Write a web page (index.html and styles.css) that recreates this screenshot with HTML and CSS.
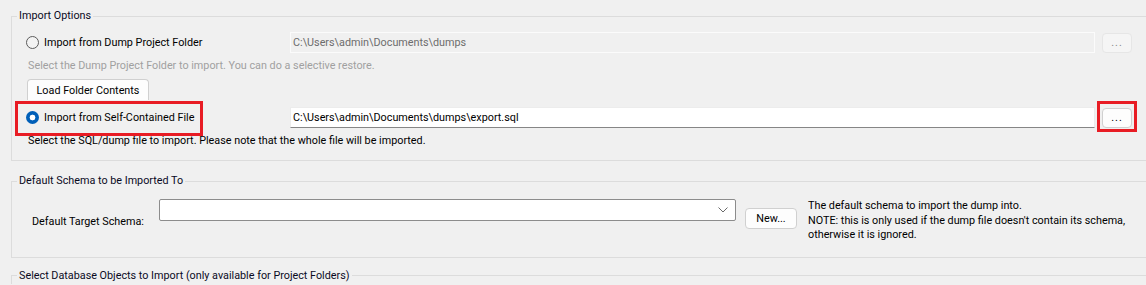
FILE: index.html
```html
<!DOCTYPE html>
<html lang="en">
<head>
    <meta charset="UTF-8">
    <title>Data Import</title>
    <link rel="stylesheet" href="styles.css">
</head>
<body>

    <fieldset class="group group-options">
        <legend>Import Options</legend>
        <div class="group-body">

            <div class="row row-first">
                <label class="radio-label">
                    <span class="radio"></span>
                    <span>Import from Dump Project Folder</span>
                </label>
                <div class="field field-disabled">C:\Users\admin\Documents\dumps</div>
                <button class="btn btn-browse" disabled>...</button>
            </div>
            <p class="hint hint-disabled">Select the Dump Project Folder to import. You can do a selective restore.</p>

            <button class="btn btn-load">Load Folder Contents</button>

            <div class="row row-second">
                <label class="radio-label marked">
                    <span class="radio checked"></span>
                    <span>Import from Self-Contained File</span>
                </label>
                <div class="field">C:\Users\admin\Documents\dumps\export.sql</div>
                <button class="btn btn-browse marked-btn">...</button>
            </div>
            <p class="hint">Select the SQL/dump file to import. Please note that the whole file will be imported.</p>

        </div>
    </fieldset>

    <fieldset class="group group-schema">
        <legend>Default Schema to be Imported To</legend>
        <div class="group-body">

            <div class="schema-row">
                <span class="schema-label">Default Target Schema:</span>
                <div class="combo">
                    <svg class="chevron" width="10" height="6" viewBox="0 0 10 6">
                        <path d="M0.5 0.5 L5 5 L9.5 0.5" fill="none" stroke="#6a6a6a" stroke-width="1"/>
                    </svg>
                </div>
                <button class="btn btn-new">New...</button>
                <p class="note">The default schema to import the dump into.<br>NOTE: this is only used if the dump file doesn't contain its schema,<br>otherwise it is ignored.</p>
            </div>

        </div>
    </fieldset>

    <fieldset class="group group-objects">
        <legend>Select Database Objects to Import (only available for Project Folders)</legend>
    </fieldset>

</body>
</html>
```

FILE: styles.css
```css
body {
    margin: 0;
    background-color: #f0f0f0;
    font-family: Roboto, 'Liberation Sans', sans-serif;
    font-size: 10.8px;
    color: #000;
    overflow: hidden;
    height: 285px;
}

.group {
    border: 1px solid #dcdcdc;
    margin: 0 -2px 0 11px;
    padding: 0;
    min-width: 0;
}

.group legend {
    margin-left: 5px;
    padding: 0 2px;
    line-height: 16px;
    color: #0a0a1e;
}

.group-body {
    padding: 0 15px 0 14px;
}

.group-options {
    margin-top: 8px;
}

.group-options .group-body {
    padding-bottom: 11px;
}

.group-schema {
    margin-top: 12px;
}

.group-schema .group-body {
    padding-bottom: 14px;
}

.group-objects {
    margin-top: 10px;
    border-bottom: none;
}

.row {
    display: flex;
    align-items: center;
    height: 21px;
}

.row-first {
    margin-top: 8px;
}

.row-second {
    margin-top: 7px;
}

.radio-label {
    display: flex;
    align-items: center;
    gap: 5px;
    width: 264px;
    flex-shrink: 0;
    position: relative;
    white-space: nowrap;
}

.radio {
    width: 11px;
    height: 11px;
    border: 1px solid #5c5c5c;
    border-radius: 50%;
    background-color: #f3f3f3;
}

.radio.checked {
    width: 13px;
    height: 13px;
    border: none;
    background: radial-gradient(circle, #fff 0 2.6px, #005fb8 3.2px);
}

/* red annotation frames drawn over the dialog */
.marked::after {
    content: "";
    position: absolute;
    left: -11px;
    top: -10px;
    width: 182px;
    height: 29px;
    border: 3px solid #e81c24;
}

.marked-btn {
    position: relative;
}

.marked-btn::after {
    content: "";
    position: absolute;
    left: -6px;
    top: -8px;
    width: 34px;
    height: 25px;
    border: 3px solid #e81c24;
}

.field {
    flex: 1;
    height: 21px;
    box-sizing: border-box;
    padding: 0 2px;
    line-height: 19px;
    background-color: #fff;
    border: 1px solid #ececec;
    border-bottom-color: #868686;
    white-space: nowrap;
}

.field-disabled {
    background-color: #f0f0f0;
    border: 1px solid #fbfbfb;
    color: #6d6d6d;
}

.btn {
    font-family: inherit;
    font-size: inherit;
    color: #000;
    background-color: #fdfdfd;
    border: 1px solid #d0d0d0;
    border-radius: 4px;
    padding: 0;
    box-sizing: border-box;
    white-space: nowrap;
}

.btn:disabled {
    background-color: #f5f5f5;
    border-color: #e6e6e6;
    color: #8a8a8a;
}

.btn-browse {
    width: 30px;
    height: 20px;
    margin-left: 7px;
    line-height: 16px;
    letter-spacing: 1px;
}

.btn-load {
    display: block;
    margin: 5px 0 0 1px;
    width: 122px;
    height: 21px;
    border-bottom: none;
    border-radius: 4px 4px 0 0;
}

.hint {
    margin: 5px 0 0 2px;
    line-height: 16px;
    white-space: nowrap;
}

.hint-disabled {
    color: #a0a0a0;
}

.schema-row {
    display: flex;
    align-items: flex-start;
    margin-top: 10px;
}

.schema-label {
    width: 127px;
    flex-shrink: 0;
    margin: 15px 0 0 6px;
    line-height: 16px;
    white-space: nowrap;
}

.combo {
    width: 577px;
    flex-shrink: 0;
    height: 22px;
    box-sizing: border-box;
    background-color: #fff;
    border: 1px solid #8c8c8c;
    border-radius: 2px;
    display: flex;
    align-items: center;
    justify-content: flex-end;
    padding-right: 7px;
}

.btn-new {
    width: 52px;
    height: 21px;
    flex-shrink: 0;
    margin: 9px 0 0 9px;
}

.note {
    margin: 0 0 0 11px;
    line-height: 14.5px;
    white-space: nowrap;
}
```
